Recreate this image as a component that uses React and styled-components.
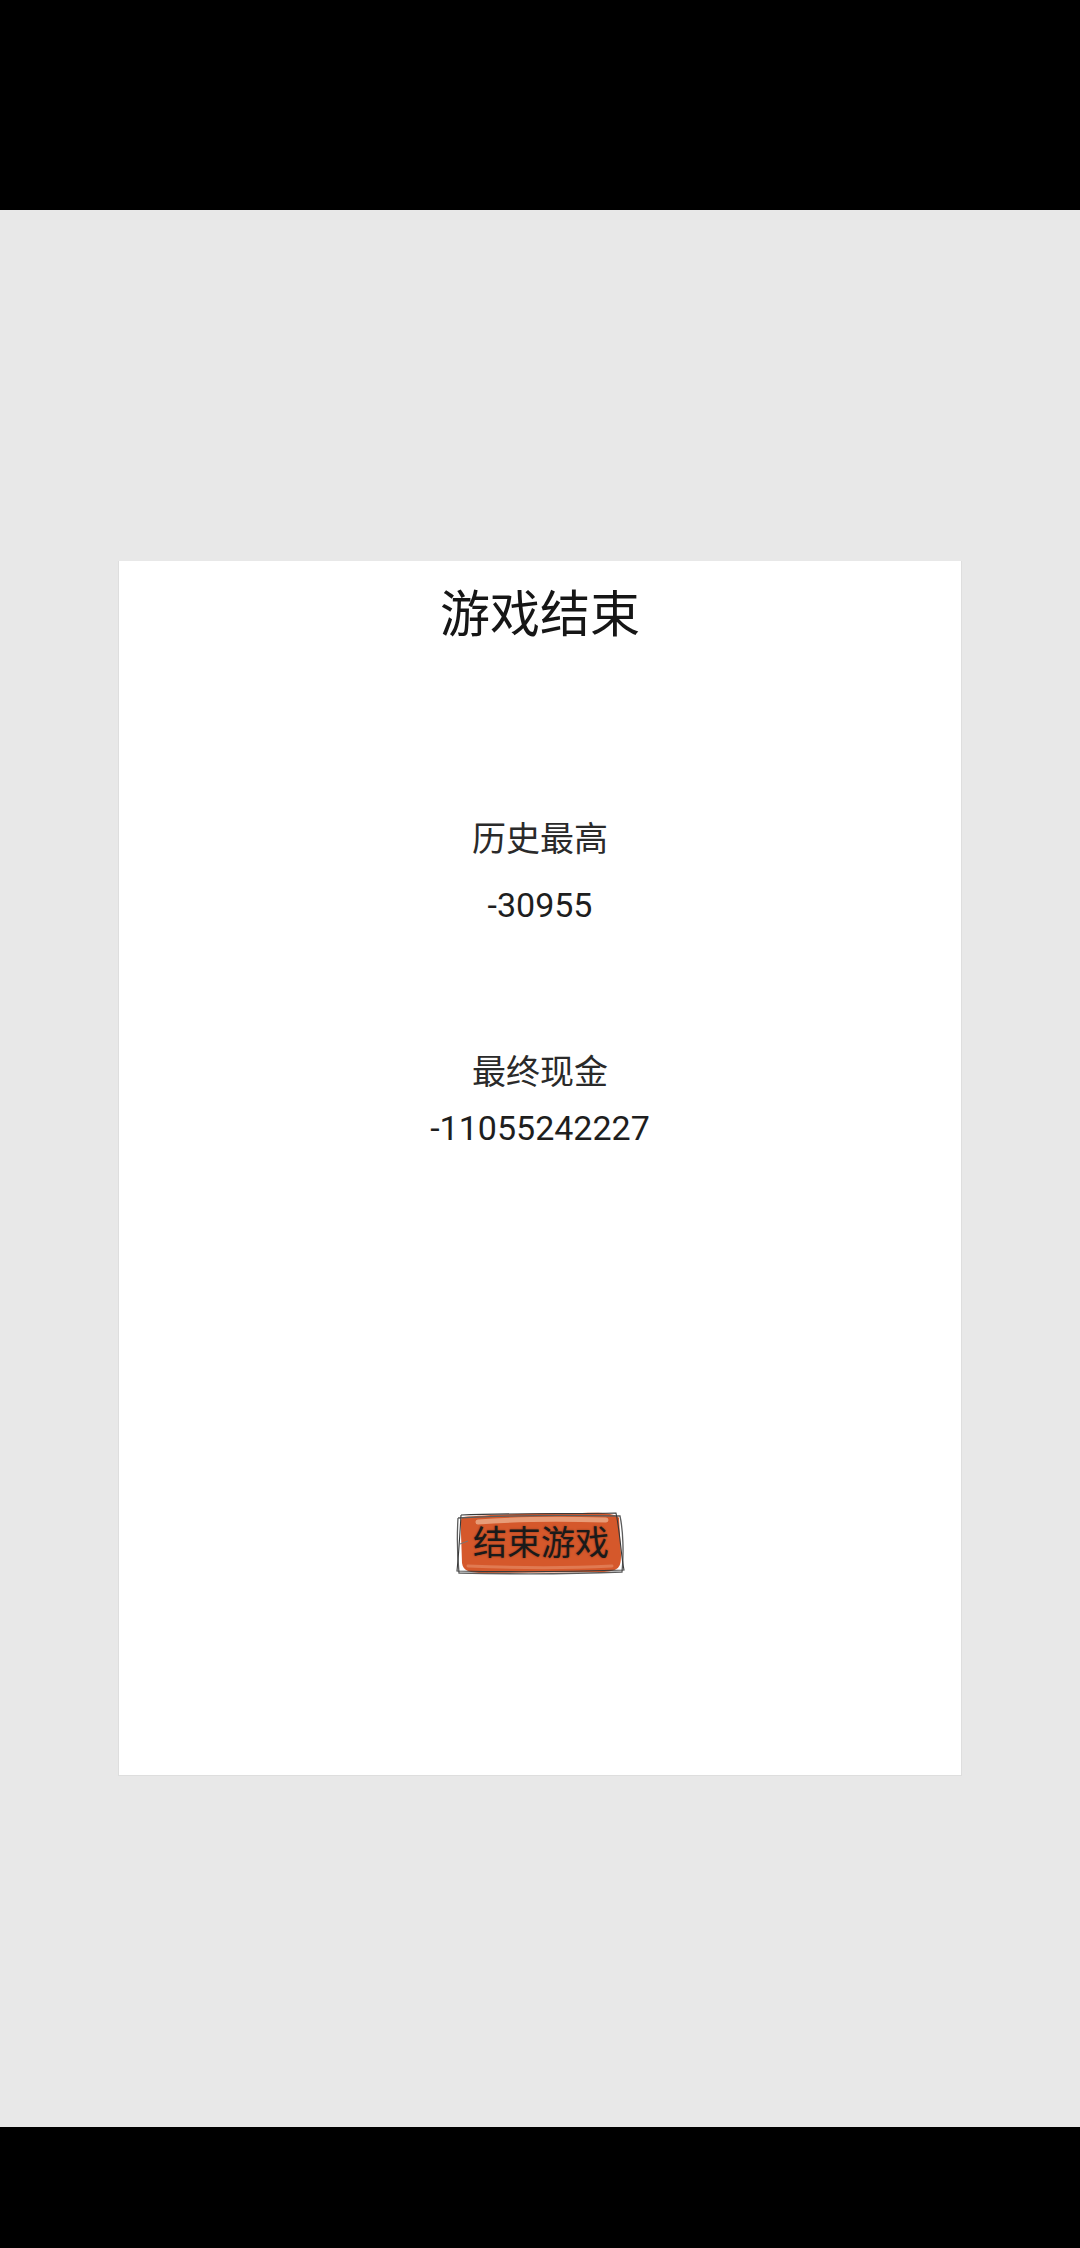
import React from "react";
import styled, { createGlobalStyle } from "styled-components";

const GlobalStyle = createGlobalStyle`
  html, body {
    margin: 0;
    padding: 0;
    background: #000;
  }
  body {
    font-family: Roboto, "Noto Sans CJK SC", sans-serif;
  }
`;

const Screen = styled.div`
  width: 1080px;
  height: 2248px;
  display: flex;
  flex-direction: column;
`;

const SystemBar = styled.div`
  height: ${(p) => p.h}px;
  flex-shrink: 0;
  background: #000;
`;

const Body = styled.div`
  flex: 1;
  background: #e8e8e8;
  display: flex;
  align-items: center;
  justify-content: center;
`;

const Card = styled.div`
  width: 844px;
  height: 1215px;
  box-sizing: border-box;
  background: #fff;
  border: 1px solid #dedede;
  border-top: none;
  display: flex;
  flex-direction: column;
  align-items: center;
  padding-top: 29px;
`;

const Title = styled.div`
  font-size: 50px;
  line-height: 50px;
  color: #161616;
`;

const Label = styled.div`
  font-size: 34px;
  line-height: 34px;
  color: #2a2a2a;
  margin-top: ${(p) => p.top}px;
`;

const Value = styled.div`
  font-size: 34px;
  line-height: 34px;
  color: #1e1e1e;
  margin-top: ${(p) => p.top}px;
`;

const SketchButton = styled.button`
  position: relative;
  margin-top: 363px;
  width: 172px;
  height: 70px;
  border: none;
  background: transparent;
  padding: 0 0 0 2px;
  font-family: Roboto, "Noto Sans CJK SC", sans-serif;
  font-size: 34px;
  line-height: 66px;
  color: #1a1a1a;
  text-shadow: 0 0 2px rgba(40, 10, 0, 0.45);
  cursor: pointer;
  svg {
    position: absolute;
    left: 0;
    top: 0;
  }
  span {
    position: relative;
  }
`;

const Sketch = () => (
  <svg width="172" height="70" viewBox="0 0 172 70">
    <path
      d="M9 9 C40 6 90 5 128 5 C150 4 163 6 165 10 L167 47 C167 59 165 63 150 64 L30 65 C16 65 9 63 8 55 L7 26 C7 15 6 10 9 9 Z"
      fill="#d5582b"
    />
    <path
      d="M24 14 C60 11 110 11 152 12"
      stroke="#eaa886"
      strokeWidth="5"
      fill="none"
      strokeLinecap="round"
      opacity="0.85"
    />
    <path
      d="M14 58 C60 60 120 60 158 58"
      stroke="#e07a52"
      strokeWidth="3"
      fill="none"
      strokeLinecap="round"
    />
    <path
      d="M4 10 C40 8 110 7 166 8 C169 22 170 45 168 64 C120 66 50 66 5 65 C3 45 3 27 4 10"
      stroke="#5c5c5c"
      strokeWidth="1.3"
      fill="none"
    />
    <path
      d="M7 7 C60 5 120 6 162 5 C166 24 167 47 170 62 C110 64 50 64 3 63 C5 43 6 24 7 7"
      stroke="#3a3a3a"
      strokeWidth="1.1"
      fill="none"
    />
    <path d="M14 33 L6 36" stroke="#777" strokeWidth="1" fill="none" />
  </svg>
);

export default function App() {
  return (
    <>
      <GlobalStyle />
      <Screen>
        <SystemBar h={210} />
        <Body>
          <Card>
            <Title>游戏结束</Title>
            <Label top={182}>历史最高</Label>
            <Value top={32}>-30955</Value>
            <Label top={133}>最终现金</Label>
            <Value top={22}>-11055242227</Value>
            <SketchButton>
              <Sketch />
              <span>结束游戏</span>
            </SketchButton>
          </Card>
        </Body>
        <SystemBar h={121} />
      </Screen>
    </>
  );
}
